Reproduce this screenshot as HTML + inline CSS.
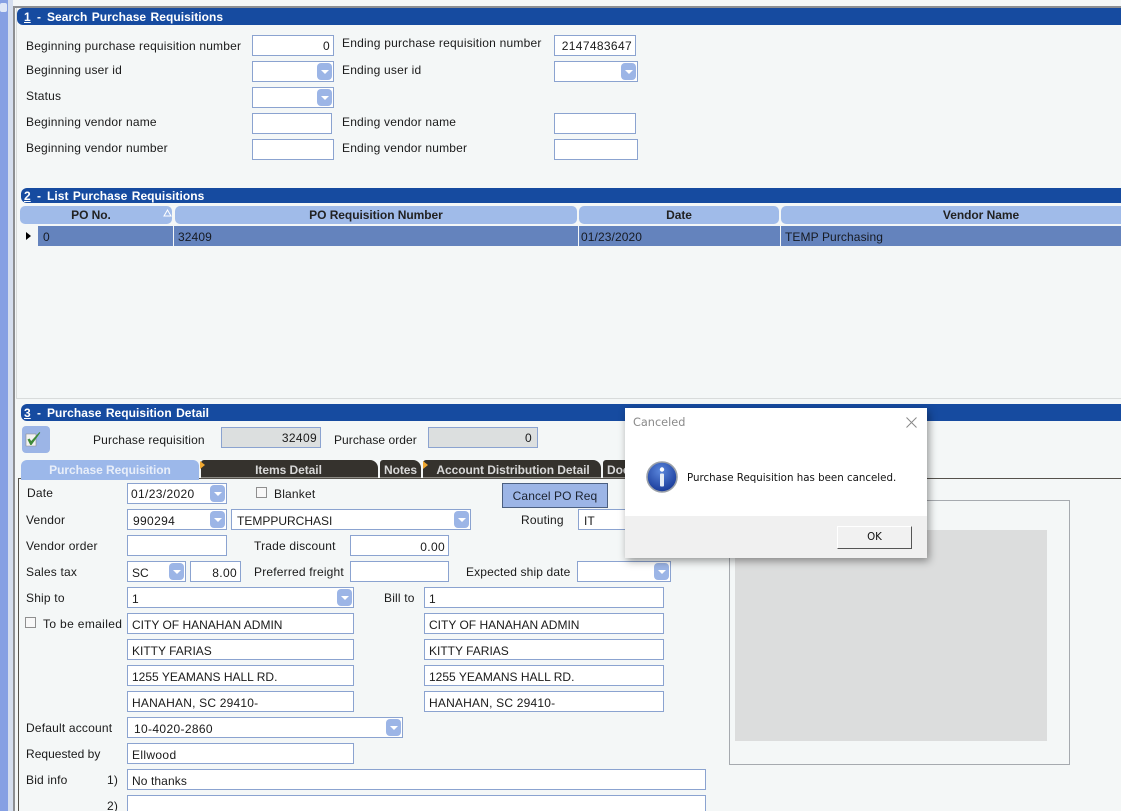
<!DOCTYPE html>
<html><head><meta charset="utf-8"><style>
html,body{margin:0;padding:0;width:1121px;height:811px;overflow:hidden}
#p{position:absolute;left:0;top:0;width:1121px;height:811px;overflow:hidden;background:#f4f7f7;font-family:"Liberation Sans",sans-serif;font-size:12px;color:#111}
#p div{position:absolute;box-sizing:border-box;white-space:nowrap}
#p .l{height:14px;line-height:14px;letter-spacing:.19px;color:#1a1a1a}
#p .i{height:21px;background:#fff;border:1px solid #8ba3d0;line-height:22px;padding:0 4px;letter-spacing:0;color:#1a1a1a}
#p .n{letter-spacing:.35px}
#p .s{line-height:20px}
#p .r{text-align:right;padding-right:3px}
#p .g{background:#dcdfdf}
#p .a{width:15px;height:17px;background:#9cb5e6;border-radius:4px;top:1px;right:1px}
#p .a:after{content:"";position:absolute;left:4px;top:7px;border:4px solid transparent;border-top:4px solid #fff;border-bottom:0}
#p .h{left:21px;width:1100px;height:17px;background:#164ba0;border-radius:6px 0 0 6px;color:#fff;font-weight:bold;line-height:18px;letter-spacing:.05px;word-spacing:1px}
#p .c{top:206px;height:18px;background:#a0bbe9;border-radius:5px;font-weight:bold;text-align:center;line-height:19px;color:#222;letter-spacing:-.05px}
#p .t{top:460px;height:18px;background:#35322d;color:#d8d8d8;font-weight:bold;text-align:center;line-height:20px;border-radius:3px 8px 0 0;letter-spacing:-.05px;border-bottom:1px solid #8d8b85}
#p .cell{top:226px;height:20px;background:#6483bd;line-height:22px;padding-left:4px;color:#161a22;letter-spacing:.1px}
</style></head><body><div id="p">
<div style="left:0;top:0;width:8px;height:811px;background:#86a0e3"></div>
<div style="left:8px;top:0;width:5px;height:811px;background:#d5deee"></div>
<div style="left:13px;top:6px;width:2px;height:805px;background:#8d8f92"></div>
<div style="left:13px;top:6px;width:1108px;height:2px;background:#8d8f92"></div>
<div style="left:0;top:3px;width:7px;height:9px;background:#dfe7f7;border-radius:2px"></div>
<div style="left:16px;top:398px;width:1105px;height:1px;background:#d8dbdb"></div>
<div style="left:16px;top:8px;width:1px;height:390px;background:#d8dbdb"></div>

<div class="h" style="top:8px;left:17px;width:1104px"><div style="left:7px"><u>1</u></div><div style="left:20px">-</div><div style="left:30px">Search Purchase Requisitions</div></div>
<div class="l" style="left:26px;top:39px">Beginning purchase requisition number</div>
<div class="i r n s" style="left:252px;top:35px;width:82px">0</div>
<div class="l" style="left:342px;top:36px;letter-spacing:.22px">Ending purchase requisition number</div>
<div class="i r n s" style="left:554px;top:35px;width:82px">2147483647</div>
<div class="l" style="left:26px;top:63px">Beginning user id</div>
<div class="i" style="left:252px;top:61px;width:82px"><div class="a"></div></div>
<div class="l" style="left:342px;top:63px">Ending user id</div>
<div class="i" style="left:554px;top:61px;width:84px"><div class="a"></div></div>
<div class="l" style="left:26px;top:89px">Status</div>
<div class="i" style="left:252px;top:87px;width:82px"><div class="a"></div></div>
<div class="l" style="left:26px;top:115px">Beginning vendor name</div>
<div class="i" style="left:252px;top:113px;width:80px"></div>
<div class="l" style="left:342px;top:115px">Ending vendor name</div>
<div class="i" style="left:554px;top:113px;width:82px"></div>
<div class="l" style="left:26px;top:141px">Beginning vendor number</div>
<div class="i" style="left:252px;top:139px;width:82px"></div>
<div class="l" style="left:342px;top:141px">Ending vendor number</div>
<div class="i" style="left:554px;top:139px;width:84px"></div>

<div class="h" style="top:188px;height:15px;line-height:16px"><div style="left:3px"><u>2</u></div><div style="left:16px">-</div><div style="left:26px">List Purchase Requisitions</div></div>
<div class="c" style="left:20px;width:152px;padding-right:10px">PO No.</div>
<svg style="position:absolute;left:163px;top:209px" width="9" height="8" viewBox="0 0 9 8"><path d="M4.500 1L8 7H1z" fill="none" stroke="#fff"/></svg>
<div class="c" style="left:175px;width:402px">PO Requisition Number</div>
<div class="c" style="left:579px;width:200px">Date</div>
<div class="c" style="left:781px;width:400px">Vendor Name</div>
<div style="left:26px;top:232px;border:4px solid transparent;border-left:5px solid #000;border-right:0"></div>
<div class="cell" style="left:38px;width:135px;padding-left:5px">0</div>
<div class="cell n" style="left:174px;width:404px">32409</div>
<div class="cell n" style="left:579px;width:201px;padding-left:2px">01/23/2020</div>
<div class="cell" style="left:781px;width:340px">TEMP Purchasing</div>

<div class="h" style="top:404px"><div style="left:3px"><u>3</u></div><div style="left:16px">-</div><div style="left:26px">Purchase Requisition Detail</div></div>
<div style="left:22px;top:426px;width:28px;height:27px;background:#9cb5e6;border-radius:4px"></div>
<svg style="position:absolute;left:25px;top:431px" width="17" height="17" viewBox="0 0 17 17"><path d="M1 3h10v12H1z" fill="#f2f2f2" stroke="#8a8a8a" stroke-width=".6"/><path d="M2.500 8.500l2-1 1.700 2.500L14.500 1l.8.8L6.500 14h-1.200z" fill="#3f8a38"/></svg>
<div class="l" style="left:93px;top:433px;letter-spacing:.15px">Purchase requisition</div>
<div class="i g r n s" style="left:221px;top:427px;width:100px">32409</div>
<div class="l" style="left:334px;top:433px;letter-spacing:.05px">Purchase order</div>
<div class="i g r n s" style="left:428px;top:427px;width:110px;padding-right:5px">0</div>

<div style="left:18px;top:478px;width:1103px;height:1px;background:#55524c"></div>
<div style="left:18px;top:478px;width:1px;height:333px;background:#55524c"></div>
<div class="t" style="left:21px;top:460px;width:178px;height:20px;background:#9cb8ea;color:#e8eef9;border:0;border-radius:6px 6px 0 0">Purchase Requisition</div>
<div class="t" style="left:201px;width:177px;padding-right:2px">Items Detail</div>
<div class="t" style="left:380px;width:41px">Notes</div>
<div class="t" style="left:423px;width:178px;padding-left:2px">Account Distribution Detail</div>
<div class="t" style="left:603px;width:40px;text-align:left;padding-left:4px">Documents</div>
<div style="left:200px;top:461px;border:4px solid transparent;border-left:5px solid #f0a830;border-right:0"></div>
<div style="left:423px;top:461px;border:4px solid transparent;border-left:5px solid #f0a830;border-right:0"></div>

<div class="l" style="left:27px;top:486px">Date</div>
<div class="i n s" style="left:127px;top:483px;width:100px;padding-left:3px">01/23/2020<div class="a"></div></div>
<div style="left:256px;top:487px;width:11px;height:11px;border:1px solid #8f8f8f;background:#f8f8f8"></div>
<div class="l" style="left:274px;top:487px">Blanket</div>
<div style="left:502px;top:483px;width:106px;height:25px;background:#9cb5e6;border:1px solid #4b5f80;text-align:center;line-height:24px;letter-spacing:.1px;color:#1c2330">Cancel PO Req</div>

<div class="l" style="left:26px;top:513px">Vendor</div>
<div class="i n" style="left:127px;top:509px;width:100px;padding-left:5px">990294<div class="a"></div></div>
<div class="i" style="left:231px;top:509px;width:240px;padding-left:5px">TEMPPURCHASI<div class="a"></div></div>
<div class="l" style="left:521px;top:513px">Routing</div>
<div class="i" style="left:578px;top:509px;width:60px;padding-left:5px">IT</div>

<div class="l" style="left:26px;top:539px">Vendor order</div>
<div class="i" style="left:127px;top:535px;width:100px"></div>
<div class="l" style="left:254px;top:539px">Trade discount</div>
<div class="i r n" style="left:350px;top:535px;width:99px">0.00</div>

<div class="l" style="left:26px;top:565px">Sales tax</div>
<div class="i" style="left:127px;top:561px;width:59px">SC<div class="a"></div></div>
<div class="i r n" style="left:190px;top:561px;width:51px">8.00</div>
<div class="l" style="left:254px;top:565px">Preferred freight</div>
<div class="i" style="left:350px;top:561px;width:99px"></div>
<div class="l" style="left:466px;top:565px;letter-spacing:.13px">Expected ship date</div>
<div class="i" style="left:577px;top:561px;width:94px"><div class="a"></div></div>

<div class="l" style="left:26px;top:591px">Ship to</div>
<div class="i" style="left:127px;top:587px;width:227px">1<div class="a"></div></div>
<div class="l" style="left:384px;top:591px">Bill to</div>
<div class="i" style="left:424px;top:587px;width:240px">1</div>

<div style="left:25px;top:617px;width:11px;height:11px;border:1px solid #8f8f8f;background:#f8f8f8"></div>
<div class="l" style="left:43px;top:617px;letter-spacing:.35px">To be emailed</div>
<div class="i" style="left:127px;top:613px;width:227px">CITY OF HANAHAN ADMIN</div>
<div class="i" style="left:424px;top:613px;width:240px">CITY OF HANAHAN ADMIN</div>
<div class="i" style="left:127px;top:639px;width:227px">KITTY FARIAS</div>
<div class="i" style="left:424px;top:639px;width:240px">KITTY FARIAS</div>
<div class="i" style="left:127px;top:665px;width:227px">1255 YEAMANS HALL RD.</div>
<div class="i" style="left:424px;top:665px;width:240px">1255 YEAMANS HALL RD.</div>
<div class="i" style="left:127px;top:691px;width:227px;letter-spacing:.2px">HANAHAN, SC 29410-</div>
<div class="i" style="left:424px;top:691px;width:240px;letter-spacing:.2px">HANAHAN, SC 29410-</div>

<div class="l" style="left:26px;top:721px">Default account</div>
<div class="i n" style="left:127px;top:717px;width:276px;padding-left:6px">10-4020-2860<div class="a"></div></div>
<div class="l" style="left:26px;top:747px;letter-spacing:.03px">Requested by</div>
<div class="i n" style="left:127px;top:743px;width:227px">Ellwood</div>
<div class="l" style="left:26px;top:773px">Bid info</div>
<div class="l" style="left:107px;top:773px">1)</div>
<div class="i" style="left:127px;top:769px;width:579px;letter-spacing:.1px">No thanks</div>
<div class="l" style="left:107px;top:799px">2)</div>
<div class="i" style="left:127px;top:795px;width:579px"></div>

<div style="left:729px;top:500px;width:341px;height:265px;border:1px solid #a6aaaf;background:#f4f7f7"></div>
<div style="left:735px;top:530px;width:312px;height:211px;background:#dcdddd"></div>

<div style="left:625px;top:408px;width:302px;height:150px;background:#fff;box-shadow:2px 3px 8px rgba(0,0,0,.4);font-family:'DejaVu Sans',sans-serif;font-size:10.25px">
<div style="left:8px;top:8px;color:#8a8a8a;font-size:11.3px">Canceled</div>
<svg style="position:absolute;left:281px;top:9px" width="11" height="11" viewBox="0 0 11 11"><path d="M.5.5l10 10M10.500.5l-10 10" stroke="#888" fill="none"/></svg>
<svg style="position:absolute;left:21px;top:53px" width="32" height="32" viewBox="0 0 32 32"><defs><radialGradient id="x" cx=".45" cy=".3" r=".8"><stop offset="0" stop-color="#5a86dc"/><stop offset="1" stop-color="#0f2f8f"/></radialGradient></defs><circle cx="16" cy="16" r="15" fill="url(#x)" stroke="#9aa0a8" stroke-width="1.6"/><circle cx="16" cy="8.500" r="2.200" fill="#fff"/><rect x="14" y="12.500" width="4" height="13" rx="1" fill="#e6ecf6"/></svg>
<div style="left:62px;top:64px;color:#111">Purchase Requisition has been canceled.</div>
<div style="left:0;top:108px;width:302px;height:42px;background:#f0f0f0"></div>
<div style="left:212px;top:118px;width:75px;height:23px;background:#f1f1f1;border:1px solid;border-color:#fff #555 #555 #fff;text-align:center;line-height:21px;color:#111">OK</div>
</div>
</div></body></html>
